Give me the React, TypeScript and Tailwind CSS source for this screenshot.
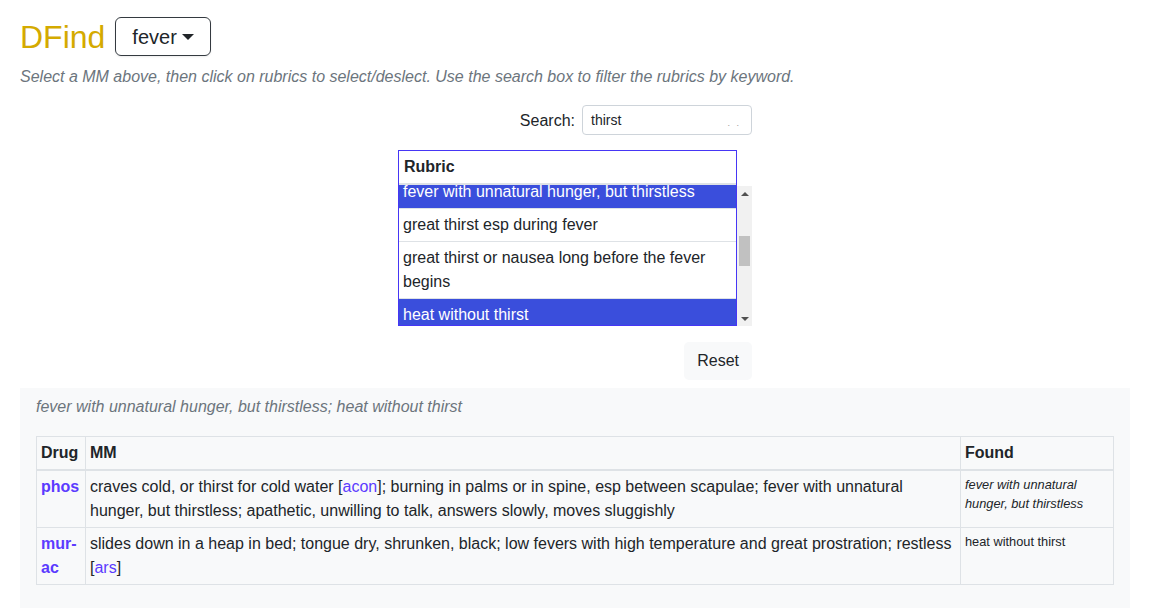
import React from 'react';

const rubrics = [
  { text: 'fever with unnatural hunger, but thirstless', selected: true },
  { text: 'great thirst esp during fever', selected: false },
  { text: 'great thirst or nausea long before the fever begins', selected: false },
  { text: 'heat without thirst', selected: true },
];

function Link({ children, bold }: { children: React.ReactNode; bold?: boolean }) {
  return <a className={`text-[#5b3bff] no-underline ${bold ? 'font-bold' : ''}`}>{children}</a>;
}

function Scrollbar() {
  return (
    <div className="w-[15px] flex flex-col">
      <div className="h-[36px] bg-white" />
      <div className="h-[140px] bg-[#f1f1f1] flex flex-col items-center">
        <div className="h-[15px] flex items-center justify-center">
          <div className="w-0 h-0 border-l-[4px] border-r-[4px] border-b-[4px] border-l-transparent border-r-transparent border-b-[#505050]" />
        </div>
        <div className="flex-1 w-full px-[2px]">
          <div className="mt-[35px] h-[30px] bg-[#c1c1c1]" />
        </div>
        <div className="h-[15px] flex items-center justify-center">
          <div className="w-0 h-0 border-l-[4px] border-r-[4px] border-t-[4px] border-l-transparent border-r-transparent border-t-[#505050]" />
        </div>
      </div>
    </div>
  );
}

export default function App() {
  return (
    <div className="min-h-[608px] bg-white text-[#212529] text-[16px] leading-[24px] font-['Liberation_Sans',Arial,sans-serif] px-[20px] pt-[17px] overflow-hidden">
      <div className="w-[1110px]">
        <div className="flex items-center gap-[10px]">
          <h2 className="text-[32px] leading-[38px] text-[#d4aa00] font-normal">DFind</h2>
          <button className="h-[39px] px-[16px] border border-[#343a40] rounded-[6px] text-[20px] flex items-center shadow-[0_1px_2px_rgba(0,0,0,0.08)]">
            fever
            <span className="ml-[5px] w-0 h-0 border-l-[6px] border-r-[6px] border-t-[6px] border-l-transparent border-r-transparent border-t-[#212529]" />
          </button>
        </div>

        <p className="mt-[9px] italic text-[#6c757d]">
          Select a MM above, then click on rubrics to select/deslect. Use the search box to filter the rubrics by keyword.
        </p>

        <div className="w-[354px] mx-auto">
          <div className="mt-[16px] flex justify-end items-center gap-[7px]">
            <span className="mt-[1px]">Search:</span>
            <div className="w-[170px] h-[30px] border border-[#ced4da] rounded-[4px] pl-[8px] pr-[10px] flex items-center justify-between text-[14px]">
              <span>thirst</span>
              <span className="text-[9px] text-[#999] mt-[6px] tracking-[2px]">. .</span>
            </div>
          </div>

          <div className="mt-[15px] flex">
            <div className="w-[339px] h-[176px] border border-[#4636f5] flex flex-col overflow-hidden">
              <div className="px-[5px] pt-[4px] pb-[4px] font-bold border-b-2 border-[#dee2e6]">Rubric</div>
              <div className="flex-1 overflow-hidden">
                <div className="-mt-[9px]">
                  {rubrics.map((r) => (
                    <div
                      key={r.text}
                      className={`px-[4px] py-[4px] border-b border-[#dee2e6] ${r.selected ? 'bg-[#3a4edc] text-white' : ''}`}
                    >
                      {r.text}
                    </div>
                  ))}
                </div>
              </div>
            </div>
            <Scrollbar />
          </div>

          <div className="mt-[16px] flex justify-end">
            <button className="h-[38px] px-[13px] bg-[#f8f9fa] rounded-[5px]">Reset</button>
          </div>
        </div>

        <div className="mt-[8px] bg-[#f8f9fa] px-[16px] pt-[7px] pb-[24px]">
          <p className="italic text-[#6c757d]">fever with unnatural hunger, but thirstless; heat without thirst</p>
          <table className="mt-[17px] w-full table-fixed border-collapse border border-[#dee2e6]">
            <colgroup>
              <col className="w-[49px]" />
              <col />
              <col className="w-[153px]" />
            </colgroup>
            <thead>
              <tr className="border-b-2 border-[#dee2e6]">
                <th className="text-left p-[4px] border border-[#dee2e6]">Drug</th>
                <th className="text-left p-[4px] border border-[#dee2e6]">MM</th>
                <th className="text-left p-[4px] border border-[#dee2e6]">Found</th>
              </tr>
            </thead>
            <tbody>
              <tr>
                <td className="p-[4px] align-top border border-[#dee2e6]">
                  <Link bold>phos</Link>
                </td>
                <td className="p-[4px] align-top border border-[#dee2e6]">
                  craves cold, or thirst for cold water [<Link>acon</Link>]; burning in palms or in spine, esp between scapulae; fever with unnatural hunger, but thirstless; apathetic, unwilling to talk, answers slowly, moves sluggishly
                </td>
                <td className="p-[4px] align-top border border-[#dee2e6] text-[12.8px] leading-[19.2px] italic">
                  fever with unnatural hunger, but thirstless
                </td>
              </tr>
              <tr>
                <td className="p-[4px] align-top border border-[#dee2e6]">
                  <Link bold>mur-ac</Link>
                </td>
                <td className="p-[4px] align-top border border-[#dee2e6]">
                  slides down in a heap in bed; tongue dry, shrunken, black; low fevers with high temperature and great prostration; restless [<Link>ars</Link>]
                </td>
                <td className="p-[4px] align-top border border-[#dee2e6] text-[12.8px] leading-[19.2px]">
                  heat without thirst
                </td>
              </tr>
            </tbody>
          </table>
        </div>
      </div>
    </div>
  );
}
